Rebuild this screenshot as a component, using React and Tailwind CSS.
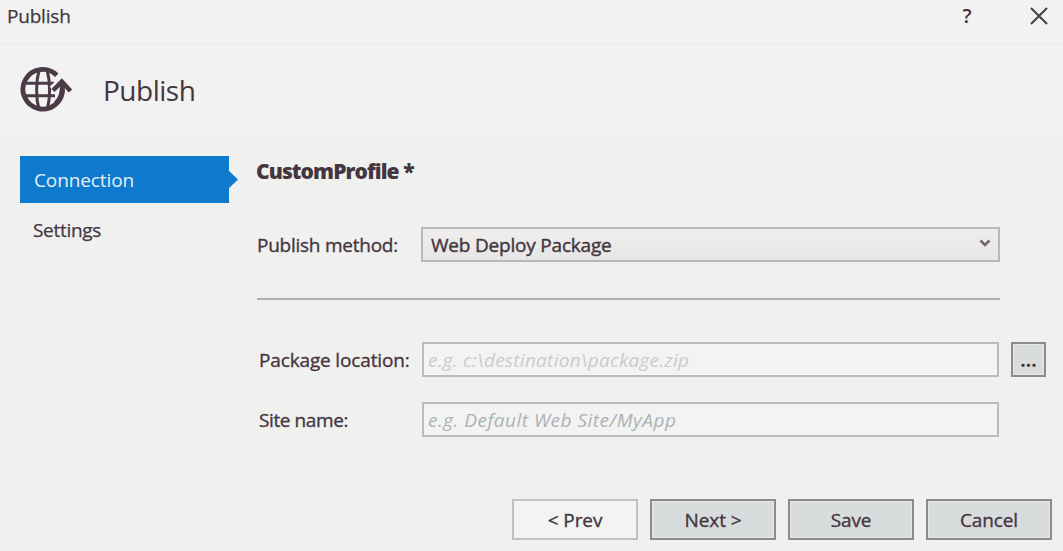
import React from "react";

function GlobeIcon() {
  return (
    <svg width="54" height="48" viewBox="0 0 54 48" fill="none" stroke="#4a3b47" className="block">
      <path d="M36.8 9.3 A19.8 19.8 0 1 0 42.5 22" strokeWidth="4.8" />
      <path d="M6 17.3 H34 M6 29.8 H35" strokeWidth="3" />
      <path d="M19 4.5 C15.8 16 15.8 32 19 43.5 M27.2 4.5 C30.4 16 30.4 32 27.2 43.5" strokeWidth="3" />
      <path d="M32.5 23.5 L41.8 14.5 L50 24" stroke="#f2f2f2" strokeWidth="8" />
      <path d="M42.3 17 C43 27 41 32 36 37.5" strokeWidth="5" />
      <path d="M33 24.5 L41.8 15.6 L50.5 25" strokeWidth="4.6" />
    </svg>
  );
}

function ActionButton({ children, className }) {
  return (
    <button
      className={`h-[41px] w-[126px] shrink-0 border-2 text-[19px] leading-6 tracking-[-0.1px] [-webkit-text-stroke:0.35px_#44363f] ${className}`}
    >
      {children}
    </button>
  );
}

const raised = "border-[#8f8987] bg-[#d9dcdd] shadow-[inset_0_0_0_1px_#e6e8e8]";
const label =
  "w-[165px] shrink-0 whitespace-nowrap pl-[2px] pt-px text-[19px] [-webkit-text-stroke:0.35px_#44363f]";

export default function App() {
  return (
    <div className="flex h-[551px] w-[1063px] flex-col overflow-hidden bg-[#f0f0ef] font-['Open_Sans','Noto_Sans',sans-serif] text-[#44363f]">
      <div className="flex h-11 shrink-0 items-start border-b border-[#e9e9e9] bg-[#f2f2f2] pl-[7px] pr-[15px]">
        <span className="mt-[3px] text-[19px] leading-[26px] tracking-[-0.2px] [-webkit-text-stroke:0.25px_#44363f]">Publish</span>
        <button className="ml-auto mt-[3px] w-3 text-[20px] font-semibold leading-[26px]">?</button>
        <button className="ml-[57px] mt-[7px]" aria-label="Close">
          <svg width="18" height="18" viewBox="0 0 18 18" stroke="#4a3b47" strokeWidth="2" className="block">
            <path d="M1 1 L17 17 M17 1 L1 17" />
          </svg>
        </button>
      </div>
      <header className="flex h-[91px] shrink-0 items-start bg-[#f2f2f2] pl-[20px]">
        <div className="mt-[22px]"><GlobeIcon /></div>
        <h1 className="ml-[29px] mt-[27px] text-[28px] leading-[38px] tracking-[-0.5px]">Publish</h1>
      </header>
      <div className="flex h-[351px] shrink-0">
        <nav className="w-[237px] shrink-0 pl-5 pt-[21px]">
          <div className="flex h-[47px] items-center">
            <div className="flex h-full w-[209px] shrink-0 items-center bg-[#0d7acd] pl-[14px] pt-px text-[19px] tracking-[-0.1px] text-[#e9f0f4]">
              Connection
            </div>
            <svg width="10" height="19" viewBox="0 0 10 19" className="-ml-px block shrink-0">
              <path d="M0 0 L10 9.5 L0 19 Z" fill="#0d7acd" />
            </svg>
          </div>
          <div className="mt-[14px] pl-[13px] text-[19px] leading-[26px] tracking-[-0.3px] [-webkit-text-stroke:0.25px_#44363f]">Settings</div>
        </nav>
        <main className="flex w-[814px] flex-col pl-[20px]">
          <h2 className="-ml-px mt-[21px] h-[30px] whitespace-nowrap text-[21px] font-extrabold leading-[30px] tracking-[-0.9px]">
            CustomProfile *
          </h2>
          <div className="mt-[41px] flex h-[35px] items-center">
            <label className="w-[164px] shrink-0 whitespace-nowrap pt-px text-[19px] tracking-[-0.25px] [-webkit-text-stroke:0.35px_#44363f]">
              Publish method:
            </label>
            <div className="flex h-[35px] w-[579px] items-center border-2 border-[#b7b8b7] bg-linear-to-b from-[#efeeec] to-[#e5e6e5] pl-[8px] pr-[7px]">
              <span className="pt-px text-[19px] tracking-[-0.2px] [-webkit-text-stroke:0.4px_#44363f]">Web Deploy Package</span>
              <svg width="12" height="9" viewBox="0 0 12 9" fill="none" stroke="#71656a" strokeWidth="2.6" className="mb-0.5 ml-auto">
                <path d="M1.5 1.5 L6 6 L10.5 1.5" />
              </svg>
            </div>
          </div>
          <div className="mt-[36px] h-[2px] w-[743px] bg-[#adafb0]" />
          <div className="mt-[42px] flex h-[35px] items-center">
            <label className={`${label} tracking-[-0.15px]`}>Package location:</label>
            <div className="flex h-[35px] w-[577px] shrink-0 items-center whitespace-pre border-2 border-[#bbbcb9] bg-[#f3f3f3] pl-1 pt-px text-[19px] italic tracking-[0.26px] text-[#c9cccc]">
              {"e.g. c:\\destination\\package.zip"}
            </div>
            <button className={`ml-[12px] h-[35px] w-[35px] shrink-0 border-2 text-[19px] font-bold leading-[26px] ${raised}`}>
              ...
            </button>
          </div>
          <div className="mt-[25px] flex h-[35px] items-center">
            <label className={`${label} tracking-[-0.4px]`}>Site name:</label>
            <div className="flex h-[35px] w-[577px] shrink-0 items-center border-2 border-[#bbbcb9] bg-[#f3f3f3] pl-1 pt-px text-[19px] italic tracking-[0.49px] text-[#acb2b5]">
              e.g. Default Web Site/MyApp
            </div>
          </div>
        </main>
      </div>
      <footer className="flex shrink-0 justify-end gap-[12px] pr-[11px] pt-[13px]">
        <ActionButton className="border-[#c0c2c1] bg-[#f3f3f3]">&lt; Prev</ActionButton>
        <ActionButton className={raised}>Next &gt;</ActionButton>
        <ActionButton className={raised}>Save</ActionButton>
        <ActionButton className={raised}>Cancel</ActionButton>
      </footer>
    </div>
  );
}
